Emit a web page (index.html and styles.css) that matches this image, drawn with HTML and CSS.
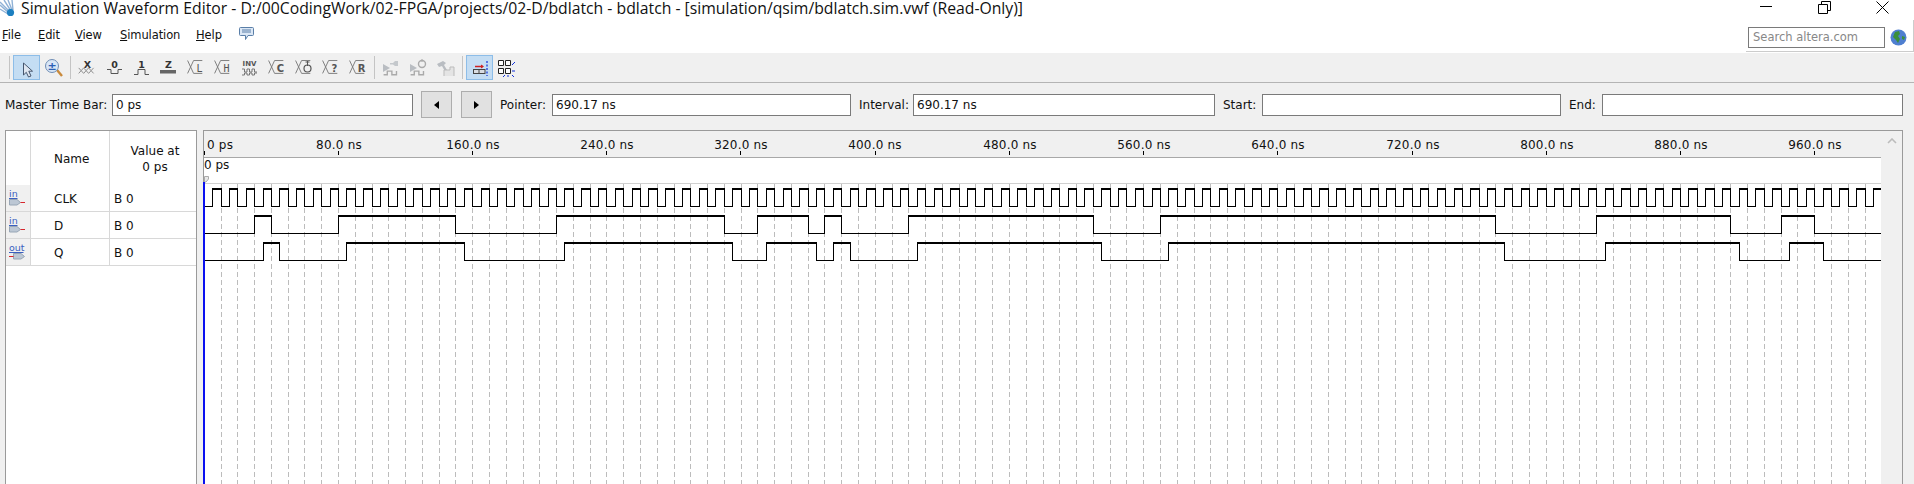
FILE: index.html
```html
<!DOCTYPE html>
<html lang="en">
<head>
<meta charset="utf-8">
<title>Simulation Waveform Editor</title>
<link rel="stylesheet" href="styles.css">
<script src="wave.js" defer></script>
</head>
<body>
<svg class="defs" width="0" height="0">
  <symbol id="cross" viewBox="0 0 27 25"><path d="M6 6 L12.5 20 H22 M6 20 L12.5 6 H22" fill="none" stroke="#777"/></symbol>
  <symbol id="hatch" viewBox="0 0 27 25"><path d="M5 14 l2.7 3 l2.7 -3 l2.7 3 l2.7 -3 l2.7 3 l2.7 -3 M5 20 l2.7 -3 l2.7 3 l2.7 -3 l2.7 3 l2.7 -3 l2.7 3" fill="none" stroke="#888"/></symbol>
  <symbol id="steps" viewBox="0 0 27 25"><path d="M6 21.5 H10 V17.5 H15 V21.5 H20 V17.5" fill="none" stroke="#aaa" stroke-width="1.5"/></symbol>
</svg>

<header class="titlebar">
  <svg class="app-icon" width="16" height="19" viewBox="0 0 16 19"><path d="M0 2 L10 12 M0 5 L9 13 M0 9 L8 14 M4 0 L11 11 M8 0 L12 10 M12 0 L13 10" stroke="#8fb1d6" stroke-width="1.4" fill="none"/><circle cx="10.5" cy="12.5" r="3.6" fill="#1c7fc0"/></svg>
  <div class="title">Simulation Waveform Editor - D:/00CodingWork/02-FPGA/projects/02-D/bdlatch - bdlatch - [simulation/qsim/bdlatch.sim.vwf (Read-Only)]</div>
  <div class="win-controls">
    <svg width="13" height="13" viewBox="0 0 13 13"><path d="M0 5.5 H12" stroke="#000"/></svg>
    <svg width="13" height="13" viewBox="0 0 13 13"><path d="M0.5 3.5 H9.5 V12.5 H0.5 Z M3.5 3 V0.5 H12.5 V9.5 H10" stroke="#000" fill="none"/></svg>
    <svg width="13" height="13" viewBox="0 0 13 13"><path d="M0.5 0.5 L12.5 12.5 M12.5 0.5 L0.5 12.5" stroke="#000"/></svg>
  </div>
</header>

<nav class="menubar">
  <span class="menu m-file"><u>F</u>ile</span>
  <span class="menu m-edit"><u>E</u>dit</span>
  <span class="menu m-view"><u>V</u>iew</span>
  <span class="menu m-sim"><u>S</u>imulation</span>
  <span class="menu m-help"><u>H</u>elp</span>
  <svg class="chat" width="15" height="14" viewBox="0 0 15 14"><path d="M1.5 0.5 H13.5 Q14.5 0.5 14.5 1.5 V7.5 Q14.5 8.5 13.5 8.5 H9 L6.5 12.5 V8.5 H1.5 Q0.5 8.5 0.5 7.5 V1.5 Q0.5 0.5 1.5 0.5 Z" fill="#dbe7f5" stroke="#5a7fa8"/><path d="M3 3 H12 M3 5 H12" stroke="#5a7fa8"/></svg>
  <div class="search-wrap">
    <div class="search">Search altera.com</div>
    <svg class="globe" width="17" height="17" viewBox="0 0 17 17"><circle cx="8.5" cy="8.5" r="8" fill="#4f7fd0"/><path d="M5 3 L9 2 L10 5 L8 7 L10 10 L8 14 L6 11 L3 8 Z M12 7 L15 8 L14 11 L12 10 Z" fill="#3b8f3a"/></svg>
  </div>
</nav>

<div class="toolbar">
  <i class="sep"></i>
  <button class="tool on"><svg viewBox="1 1 25 23"><path d="M10.5 8 V20 L13.3 17.3 L15.5 22 L18 21 L15.8 16.2 H19.5 Z" fill="#dfe6f0" stroke="#46566e"/></svg></button>
  <button class="tool"><svg viewBox="1 1 25 23"><path d="M17 15 L22 21" stroke="#c98a3c" stroke-width="2.4"/><circle cx="12" cy="11" r="6.5" fill="#d8e6f6" stroke="#6f8db5"/><text class="t-zoom" x="12" y="15">±</text></svg></button>
  <i class="sep"></i>
  <button class="tool"><svg viewBox="1 1 25 23"><text class="t-b" x="13.5" y="12.5">X</text><use href="#hatch"/></svg></button>
  <button class="tool"><svg viewBox="1 1 25 23"><text class="t-b" x="13.5" y="12.5">0</text><path d="M6 14.5 H10 V18.5 H17 V14.5 H21" fill="none" stroke="#555"/></svg></button>
  <button class="tool"><svg viewBox="1 1 25 23"><text class="t-b" x="13.5" y="12.5">1</text><path d="M6 19.5 H10 V14.5 H17 V19.5 H21" fill="none" stroke="#555"/></svg></button>
  <button class="tool"><svg viewBox="1 1 25 23"><text class="t-b" x="13.5" y="12.5">Z</text><rect x="5" y="15" width="16" height="3.5" fill="#666"/></svg></button>
  <button class="tool"><svg viewBox="1 1 25 23"><use href="#cross"/><text class="t-m" x="17.5" y="17">L</text></svg></button>
  <button class="tool"><svg viewBox="1 1 25 23"><use href="#cross"/><text class="t-m" x="17.5" y="17">H</text></svg></button>
  <button class="tool"><svg viewBox="1 1 25 23"><text class="t-inv" x="13.5" y="11">INV</text><path d="M6 14 h2.5 v3 h2.5 v-3 h2.5 v3 h2.5 v-3 h2.5 v3 h2.5 M6 20 h2.5 v-2 h2.5 v2 h2.5 v-2 h2.5 v2 h2.5 v-2 h2.5" fill="none" stroke="#777"/></svg></button>
  <button class="tool"><svg viewBox="1 1 25 23"><use href="#cross"/><text class="t-c" x="17.5" y="17">C</text></svg></button>
  <button class="tool"><svg viewBox="1 1 25 23"><use href="#cross"/><circle cx="17.5" cy="13.5" r="3.5" fill="none" stroke="#555" stroke-width="1.2"/><path d="M17.5 6 V11 M15.5 7 H19.5" stroke="#555"/></svg></button>
  <button class="tool"><svg viewBox="1 1 25 23"><use href="#cross"/><text class="t-c" x="17.5" y="17">?</text></svg></button>
  <button class="tool"><svg viewBox="1 1 25 23"><use href="#cross"/><text class="t-c" x="17.5" y="17">R</text></svg></button>
  <i class="sep"></i>
  <button class="tool"><svg viewBox="1 1 25 23"><path d="M5 9 L12 13 L5 17 Z" fill="#b9bdc2"/><path d="M12 8 H15 L17 6 H20 V11 H17 L15 9.5 H12 Z" fill="#c4c8cc"/><use href="#steps"/></svg></button>
  <button class="tool"><svg viewBox="1 1 25 23"><path d="M5 9 L12 13 L5 17 Z" fill="#b9bdc2"/><circle cx="17" cy="9" r="3.5" fill="none" stroke="#aaa" stroke-width="1.4"/><path d="M17 4 V7" stroke="#aaa"/><use href="#steps"/></svg></button>
  <button class="tool"><svg viewBox="1 1 25 23"><path d="M5 9 L11 6 L14 8 L12 10 L18 20 L15.5 21 L10 11 L7 12 Z" fill="#b9bdc2"/><path d="M12 21 V15 H18 V12 H22 V21" fill="#e4e4e4" stroke="#bbb"/></svg></button>
  <i class="sep"></i>
  <button class="tool on"><svg viewBox="1 1 25 23"><path d="M9 11.5 H17" stroke="#d02020" stroke-width="1.5"/><path d="M15 9.5 L18 11.5 L15 13.5 Z" fill="#d02020"/><rect x="7.5" y="14.5" width="11.5" height="4" fill="#d9dde2" stroke="#444"/><path d="M13 14.5 V18.5" stroke="#444"/><path d="M21 6 V21" stroke="#1030d8" stroke-width="1.2" stroke-dasharray="2 1.5"/></svg></button>
  <button class="tool"><svg viewBox="1 1 25 23"><path d="M5.500 5.500 H10.500 V10.500 H5.500 Z M12.500 5.500 H17.500 V10.500 H12.500 Z M5.500 13.500 H10.500 V18.500 H5.500 Z M12.500 13.500 H17.500 V18.500 H12.500 Z" fill="#fff" stroke="#222"/><path d="M19 10 L22 7 M19 16 H22 M12 20 L10 22 M15 20 V22 M19 20 L21 22" stroke="#1030d8"/></svg></button>
</div>

<div class="timebar">
  <span class="lbl l-master">Master Time Bar:</span><div class="field f-master">0 ps</div>
  <button class="step"><i class="tri tri-l"></i></button>
  <button class="step step2"><i class="tri tri-r"></i></button>
  <span class="lbl l-pointer">Pointer:</span><div class="field f-pointer">690.17 ns</div>
  <span class="lbl l-interval">Interval:</span><div class="field f-interval">690.17 ns</div>
  <span class="lbl l-start">Start:</span><div class="field f-start"></div>
  <span class="lbl l-end">End:</span><div class="field f-end"></div>
</div>

<main class="main">
  <section class="signals">
    <div class="sig-row sig-head">
      <div class="c-icon"></div>
      <div class="c-name c-name-head">Name</div>
      <div class="c-val c-val-head">Value at<br>0 ps</div>
    </div>
    <div class="sig-row">
      <div class="c-icon"><svg width="24" height="26" viewBox="0 0 24 26"><text class="pin-t" x="3" y="12">in</text><path d="M3 13.500 H11.500" stroke="#3a5fc0"/><path d="M3.500 14.500 H11 L14.500 17.500 L11 20 H3.500 Z" fill="#bcc7d4" stroke="#98a6b6"/><path d="M14.500 17.500 H19" stroke="#d8262c"/></svg></div>
      <div class="c-name">CLK</div><div class="c-val">B 0</div>
    </div>
    <div class="sig-row">
      <div class="c-icon"><svg width="24" height="26" viewBox="0 0 24 26"><text class="pin-t" x="3" y="12">in</text><path d="M3 13.500 H11.500" stroke="#3a5fc0"/><path d="M3.500 14.500 H11 L14.500 17.500 L11 20 H3.500 Z" fill="#bcc7d4" stroke="#98a6b6"/><path d="M14.500 17.500 H19" stroke="#d8262c"/></svg></div>
      <div class="c-name">D</div><div class="c-val">B 0</div>
    </div>
    <div class="sig-row">
      <div class="c-icon"><svg width="24" height="26" viewBox="0 0 24 26"><text class="pin-t" x="3" y="12">out</text><path d="M3 13.500 H17.500" stroke="#3a5fc0"/><path d="M7.500 14.500 H15 L18.500 17.500 L15 20 H7.500 Z" fill="#bcc7d4" stroke="#98a6b6"/><path d="M3 17.500 H7.500" stroke="#d8262c"/></svg></div>
      <div class="c-name">Q</div><div class="c-val">B 0</div>
    </div>
  </section>

  <section class="wavepanel">
    <svg class="wave" id="wave" width="1677" height="353" viewBox="0 0 1677 353">
      <rect class="ruler-bg" width="1677" height="26"/>
      <rect class="ruler-line" y="26" width="1677" height="1"/>
      <rect class="grid-top" y="52" width="1677" height="1"/>
      <g class="ruler-text">
        <text class="r-start" x="3" y="18">0 ps</text>
        <text x="135" y="18">80.0 ns</text>
        <text x="269" y="18">160.0 ns</text>
        <text x="403" y="18">240.0 ns</text>
        <text x="537" y="18">320.0 ns</text>
        <text x="671" y="18">400.0 ns</text>
        <text x="806" y="18">480.0 ns</text>
        <text x="940" y="18">560.0 ns</text>
        <text x="1074" y="18">640.0 ns</text>
        <text x="1209" y="18">720.0 ns</text>
        <text x="1343" y="18">800.0 ns</text>
        <text x="1477" y="18">880.0 ns</text>
        <text x="1611" y="18">960.0 ns</text>
      </g>
      <text class="bar-text" x="0" y="38">0 ps</text>
      <path class="flag" d="M0.500 45.500 H4.500 V48 L2 51 H0.500 Z"/>
      <path class="ticks" d="M0 20 h1 v4 h-1 z M134 20 h1 v4 h-1 z M268 20 h1 v4 h-1 z M402 20 h1 v4 h-1 z M536 20 h1 v4 h-1 z M671 20 h1 v4 h-1 z M805 20 h1 v4 h-1 z M939 20 h1 v4 h-1 z M1073 20 h1 v4 h-1 z M1208 20 h1 v4 h-1 z M1342 20 h1 v4 h-1 z M1476 20 h1 v4 h-1 z M1610 20 h1 v4 h-1 z"/>
    </svg>
    <div class="scrollbar"><svg width="10" height="6" viewBox="0 0 10 6"><path d="M1 5 L5 1 L9 5" fill="none" stroke="#bcbcbc" stroke-width="1.6"/></svg></div>
  </section>
</main>
</body>
</html>
```

FILE: styles.css
```css
* { box-sizing: border-box; }
html, body { margin: 0; height: 484px; overflow: hidden; }
body {
  background: #f0f0f0;
  color: #000;
  font: 12px "DejaVu Sans", sans-serif;
}
.defs { position: absolute; }

.titlebar {
  display: flex;
  align-items: flex-start;
  height: 20px;
  background: #fff;
}
.app-icon { flex: none; }
.title {
  margin-left: 5px;
  font: 15.75px/17px "Open Sans", sans-serif;
  white-space: nowrap;
  color: #111;
}
.win-controls {
  display: flex;
  gap: 45px;
  margin-left: auto;
  margin-right: 25px;
  padding-top: 1px;
}

.menubar {
  display: flex;
  align-items: center;
  height: 33px;
  background: #fff;
  padding-bottom: 3px;
}
.menu { color: #111; flex: none; font-size: 11.5px; letter-spacing: -0.1px; }
.m-file { margin-left: 2px; width: 36px; }
.m-edit { width: 37px; }
.m-view { width: 45px; }
.m-sim { width: 76px; }
.m-help { width: 43px; }
.chat { margin-top: -3px; }
.search-wrap {
  display: flex;
  align-items: center;
  align-self: flex-start;
  gap: 5px;
  margin-left: auto;
  height: 32px;
  width: 168px;
  padding: 7px 0 3px 2px;
  border-bottom: 1px solid #ccc;
  border-right: 1px solid #ccc;
}
.search {
  width: 137px;
  height: 21px;
  padding-left: 4px;
  border: 1px solid #7a7a7a;
  background: #fff;
  color: #888;
  font-size: 11.5px;
  line-height: 19px;
  white-space: nowrap;
}

.toolbar {
  display: flex;
  align-items: center;
  height: 30px;
  padding: 2px 0 3px 9px;
  background: #f0f0f0;
  border-bottom: 1px solid #b4b4b4;
}
.sep {
  width: 1px;
  height: 23px;
  margin-right: 3px;
  background: #c4c4c4;
}
.tool + .sep { margin-left: 3px; }
.tool {
  flex: none;
  width: 27px;
  height: 25px;
  padding: 0;
  border: 1px solid transparent;
  background: none;
}
.tool svg { display: block; width: 25px; height: 23px; }
.tool.on { background: #c4ddf3; border-color: #8dbde8; }
.t-b, .t-m, .t-c, .t-inv, .t-zoom { text-anchor: middle; font-family: "DejaVu Sans", sans-serif; }
.t-b { font-size: 9.5px; font-weight: 700; fill: #333; }
.t-m { font-family: "DejaVu Sans Mono", monospace; font-size: 10px; fill: #555; }
.t-c { font-size: 10px; font-weight: 700; fill: #555; }
.t-inv { font-size: 7px; font-weight: 700; fill: #555; }
.t-zoom { font-size: 11px; font-weight: 700; fill: #2c5fb5; }

.timebar {
  display: flex;
  align-items: center;
  height: 47px;
  padding: 0 0 4px 5px;
  background: #f0f0f0;
}
.lbl { flex: none; margin-left: 8px; white-space: nowrap; color: #111; }
.l-master { margin-left: 0; width: 107px; }
.l-pointer { width: 52px; }
.l-interval { width: 54px; }
.l-start { width: 39px; }
.l-end { width: 33px; }
.field {
  flex: none;
  height: 22px;
  padding-left: 3px;
  border: 1px solid #7a7a7a;
  background: #fff;
  color: #111;
  line-height: 20px;
}
.f-master { width: 301px; }
.f-pointer { width: 299px; }
.f-interval { width: 302px; }
.f-start { width: 299px; }
.f-end { width: 301px; }
.step {
  flex: none;
  display: flex;
  align-items: center;
  justify-content: center;
  width: 31px;
  height: 27px;
  margin-left: 8px;
  padding: 0;
  border: 1px solid #adadad;
  background: #e1e1e1;
}
.step2 { margin-left: 9px; }
.tri { width: 0; height: 0; border-style: solid; border-color: transparent; border-width: 4px 0; }
.tri-l { border-right: 5px solid #000; }
.tri-r { border-left: 5px solid #000; }

.main {
  display: flex;
  height: 354px;
  padding-left: 5px;
}
.signals {
  width: 192px;
  background: #fff;
  border: 1px solid #9a9a9a;
  border-bottom: 0;
}
.sig-row {
  display: grid;
  grid-template-columns: 25px 79px 1fr;
  height: 27px;
  border-bottom: 1px solid #d8d8d8;
}
.sig-head { height: 54px; border-bottom: 0; }
.c-icon { background: #f0f0f0; border-right: 1px solid #d8d8d8; }
.sig-head .c-icon { background: #fff; }
.c-icon svg { display: block; }
.c-name, .c-val { display: flex; align-items: center; color: #111; padding-top: 2px; }
.c-name { padding-left: 23px; border-right: 1px solid #d8d8d8; }
.c-val { padding-left: 4px; }
.c-name-head { padding-left: 23px; }
.c-val-head { justify-content: center; text-align: center; line-height: 16px; }
.pin-t { font-size: 9.5px; fill: #3a5fc0; }

.wavepanel {
  display: flex;
  width: 1700px;
  margin-left: 6px;
  background: #fff;
  border: 1px solid #9a9a9a;
  border-bottom: 0;
}
.wave { display: block; flex: none; overflow: visible; }
.ruler-bg { fill: #f0f0f0; }
.ruler-line { fill: #a8a8a8; }
.grid-top { fill: #d0d0d0; }
.ruler-text text { text-anchor: middle; fill: #111; font-size: 12px; letter-spacing: 0.2px; }
.ruler-text .r-start { text-anchor: start; }
.bar-text { fill: #111; font-size: 12px; }
.flag { fill: #e8e8e8; stroke: #aaa; }
.ticks { fill: #000; }
.dash { stroke: #bcbcbc; stroke-dasharray: 5 3; fill: none; }
.trace { fill: #000; shape-rendering: crispEdges; }
.marker { fill: #0a10f0; }
.scrollbar {
  flex: 1;
  display: flex;
  justify-content: center;
  padding-top: 7px;
  background: #f0f0f0;
}
.scrollbar svg { display: block; }
```

FILE: wave.js
```js
// Draws the simulation traces from their edge times (ns).
(function () {
  var NS = 'http://www.w3.org/2000/svg';
  var svg = document.getElementById('wave');
  var END = 1677;
  var px = function (t) { return Math.floor(t * 1.6775 + 0.3); };

  function add(tag, attrs) {
    var el = document.createElementNS(NS, tag);
    for (var k in attrs) el.setAttribute(k, attrs[k]);
    svg.appendChild(el);
  }

  var dash = '';
  for (var t = 10; t < 1000; t += 10) dash += 'M' + (px(t) + 0.5) + ' 53 V353 ';
  add('path', { 'class': 'dash', d: dash });

  function trace(edges, hi, lo) {
    var d = '', x = 0, level = 0;
    var points = edges.concat([null]);
    points.forEach(function (e) {
      var nx = e === null ? END : px(e);
      if (level) d += 'M' + x + ' ' + hi + 'H' + nx + 'v2H' + x + 'z';
      else d += 'M' + x + ' ' + lo + 'H' + nx + 'v1H' + x + 'z';
      if (e !== null) d += 'M' + nx + ' ' + hi + 'h1V' + (lo + 1) + 'h-1z';
      x = nx;
      level = 1 - level;
    });
    add('path', { 'class': 'trace', d: d });
  }

  var clk = [];
  for (var c = 5; c < 1000; c += 5) clk.push(c);
  var dEdges = [30, 40, 80, 150, 210, 310, 330, 360, 370, 380, 420, 530, 570, 770, 830, 910, 940, 960];
  var qEdges = dEdges.map(function (e) { return e + 5; });

  trace(clk, 57, 75);
  trace(dEdges, 84, 102);
  trace(qEdges, 111, 129);

  add('rect', { 'class': 'marker', x: -1, y: 51, width: 2, height: 302 });
})();
```
